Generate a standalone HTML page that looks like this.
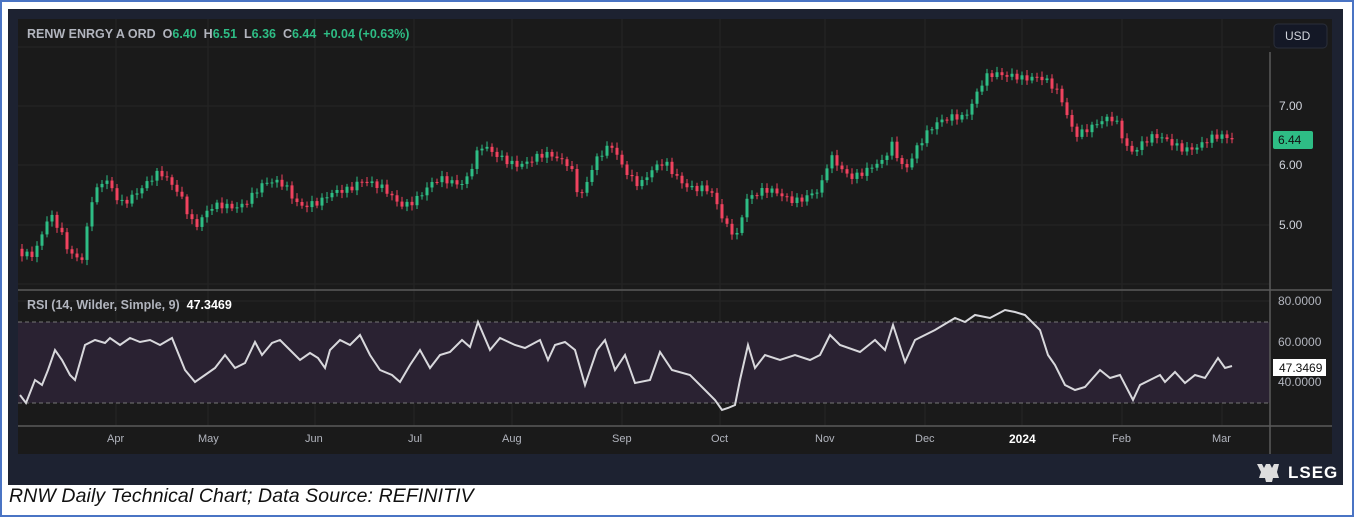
<!DOCTYPE html>
<html><head><meta charset="utf-8"><style>
*{margin:0;padding:0;box-sizing:border-box}
body{width:1354px;height:517px;background:#fff;position:relative;overflow:hidden;font-family:"Liberation Sans",sans-serif}
.outer{position:absolute;left:0;top:0;width:1354px;height:517px;border:2px solid #4a74c4}
.frame{position:absolute;left:8px;top:9px;width:1335px;height:476px;background:#1d2231}
.panel{position:absolute;left:18px;top:19px;width:1314px;height:435px;background:#1a1a1a}
.t{position:absolute;font-size:12px;color:#b2b5be;white-space:nowrap}
.g{color:#2ebd85}
.cap{position:absolute;left:9px;top:485px;font-size:19.5px;letter-spacing:0.1px;font-style:italic;color:#111}
</style></head><body>
<div class="outer"></div>
<div class="frame"></div>
<div class="panel"></div>
<svg id="s" width="1354" height="517" style="position:absolute;left:0;top:0">
<g stroke="#252525" stroke-width="1">
<line x1="116" y1="19" x2="116" y2="426"/><line x1="208" y1="19" x2="208" y2="426"/><line x1="315" y1="19" x2="315" y2="426"/><line x1="414" y1="19" x2="414" y2="426"/><line x1="512" y1="19" x2="512" y2="426"/><line x1="622" y1="19" x2="622" y2="426"/><line x1="720" y1="19" x2="720" y2="426"/><line x1="825" y1="19" x2="825" y2="426"/><line x1="925" y1="19" x2="925" y2="426"/><line x1="1022" y1="19" x2="1022" y2="426"/><line x1="1122" y1="19" x2="1122" y2="426"/><line x1="1222" y1="19" x2="1222" y2="426"/>
<line x1="18" y1="47" x2="1270" y2="47"/><line x1="18" y1="106" x2="1270" y2="106"/><line x1="18" y1="165" x2="1270" y2="165"/><line x1="18" y1="225" x2="1270" y2="225"/><line x1="18" y1="284" x2="1270" y2="284"/>
<line x1="18" y1="301" x2="1270" y2="301"/><line x1="18" y1="342" x2="1270" y2="342"/><line x1="18" y1="382" x2="1270" y2="382"/>
</g>
<rect x="18" y="322" width="1252" height="81" fill="#2a2232"/>
<line x1="18" y1="322" x2="1270" y2="322" stroke="#777" stroke-dasharray="4,3"/>
<line x1="18" y1="403" x2="1270" y2="403" stroke="#777" stroke-dasharray="4,3"/>
<line x1="18" y1="290" x2="1332" y2="290" stroke="#5a5a5a" stroke-width="1.5"/>
<line x1="18" y1="426" x2="1332" y2="426" stroke="#5a5a5a" stroke-width="1.5"/>
<line x1="1270" y1="52" x2="1270" y2="454" stroke="#5a5a5a" stroke-width="1.5"/>
<g id="c"></g>
<polyline id="r" fill="none" stroke="#d8d8dc" stroke-width="2"/>
<rect x="1274" y="24" width="53" height="24" rx="4" fill="#141826" stroke="#2a2e39"/>
<rect x="1273" y="131" width="40" height="18" rx="2" fill="#2ebd85"/>
<rect x="1273" y="359" width="53" height="17" fill="#fff"/>
<g fill="#ddd"><path d="M1257 464h5l2 4 2-4h4l2 4 2-4h5l-2 8 2 6h-6l-1 4h-6l-1-4h-6l2-6z"/></g>
</svg>
<div class="t" style="left:27px;top:27px;font-size:12.5px;font-weight:600">RENW ENRGY A ORD&nbsp; O<span class="g">6.40</span>&nbsp; H<span class="g">6.51</span>&nbsp; L<span class="g">6.36</span>&nbsp; C<span class="g">6.44</span>&nbsp; <span class="g">+0.04 (+0.63%)</span></div>
<div class="t" style="left:1285px;top:29px;color:#d1d4dc">USD</div>
<div class="t" style="left:1279px;top:99px;color:#d1d4dc">7.00</div>
<div class="t" style="left:1279px;top:158px;color:#d1d4dc">6.00</div>
<div class="t" style="left:1279px;top:218px;color:#d1d4dc">5.00</div>
<div class="t" style="left:1278px;top:133px;color:#111">6.44</div>
<div class="t" style="left:27px;top:298px;font-size:12.5px;font-weight:600">RSI (14, Wilder, Simple, 9)&nbsp; <b style="color:#fff">47.3469</b></div>
<div class="t" style="left:1278px;top:294px">80.0000</div>
<div class="t" style="left:1278px;top:335px">60.0000</div>
<div class="t" style="left:1278px;top:375px">40.0000</div>
<div class="t" style="left:1279px;top:361px;color:#111">47.3469</div>
<div class="t" style="left:107px;top:433px;font-size:11px">Apr</div>
<div class="t" style="left:198px;top:433px;font-size:11px">May</div>
<div class="t" style="left:305px;top:433px;font-size:11px">Jun</div>
<div class="t" style="left:408px;top:433px;font-size:11px">Jul</div>
<div class="t" style="left:502px;top:433px;font-size:11px">Aug</div>
<div class="t" style="left:612px;top:433px;font-size:11px">Sep</div>
<div class="t" style="left:711px;top:433px;font-size:11px">Oct</div>
<div class="t" style="left:815px;top:433px;font-size:11px">Nov</div>
<div class="t" style="left:915px;top:433px;font-size:11px">Dec</div>
<div class="t" style="left:1009px;top:432px;font-size:12px;color:#fff;font-weight:bold">2024</div>
<div class="t" style="left:1112px;top:433px;font-size:11px">Feb</div>
<div class="t" style="left:1212px;top:433px;font-size:11px">Mar</div>
<div class="t" style="left:1288px;top:463px;font-size:17px;font-weight:bold;color:#fff;letter-spacing:1px">LSEG</div>
<div class="cap">RNW Daily Technical Chart; Data Source: REFINITIV</div>
<script>
var P=[[22,4.6],[35,4.5],[50,5.1],[60,4.9],[70,4.6],[82,4.5],[92,5.4],[105,5.7],[120,5.4],[135,5.6],[150,5.7],[160,5.8],[180,5.6],[195,5.0],[210,5.2],[225,5.3],[240,5.4],[260,5.6],[285,5.7],[300,5.4],[320,5.3],[340,5.6],[360,5.8],[375,5.6],[400,5.4],[420,5.5],[440,5.7],[465,5.8],[480,6.3],[495,6.1],[520,6.1],[545,6.1],[570,6.1],[580,5.5],[595,6.0],[612,6.3],[625,6.0],[640,5.7],[665,6.0],[690,5.7],[710,5.5],[725,5.0],[738,4.9],[745,5.5],[760,5.5],[790,5.5],[820,5.5],[830,6.1],[850,5.9],[870,5.9],[885,6.0],[890,6.4],[905,6.0],[915,6.3],[935,6.6],[955,6.9],[965,6.9],[985,7.4],[1000,7.5],[1015,7.6],[1040,7.4],[1060,7.2],[1075,6.6],[1095,6.6],[1115,6.8],[1130,6.3],[1150,6.4],[1175,6.4],[1200,6.3],[1215,6.4],[1225,6.5],[1232,6.44]];
function ip(x){for(var i=0;i<P.length-1;i++){if(x<=P[i+1][0]){var a=P[i],b=P[i+1],t=(x-a[0])/(b[0]-a[0]);return a[1]+t*(b[1]-a[1]);}}return P[P.length-1][1];}
function Y(p){return 106+(7-p)*59.5;}
var h='',prev=ip(22);
for(var x=22;x<=1232;x+=5){var c=ip(x)+0.09*Math.sin(x*1.37)+0.05*Math.sin(x*0.53);if(x==1232)c=6.44;var o=prev;var hi=Math.max(o,c)+0.04+0.05*Math.abs(Math.sin(x*2.1)),lo=Math.min(o,c)-0.04-0.05*Math.abs(Math.cos(x*1.7));var col=c>=o?'#2ebd85':'#f0435f';var y1=Y(Math.max(o,c)),y2=Y(Math.min(o,c));if(y2-y1<1)y2=y1+1;
h+='<line x1="'+x+'" x2="'+x+'" y1="'+Y(hi)+'" y2="'+Y(lo)+'" stroke="'+col+'"/><rect x="'+(x-1.5)+'" y="'+y1+'" width="3" height="'+(y2-y1)+'" fill="'+col+'"/>';prev=c;}
document.getElementById('c').innerHTML=h;
document.getElementById('r').setAttribute('points',"20,395 26,403 35,380 42,385 48,370 55,350 62,360 70,375 75,380 85,345 95,340 105,343 110,338 120,345 130,338 140,342 150,340 160,345 172,338 185,370 195,382 205,375 215,368 225,355 235,368 245,363 255,342 262,355 272,343 280,340 290,350 300,360 310,353 318,358 325,368 330,350 340,340 350,345 360,335 370,355 380,370 392,375 400,382 410,365 420,350 430,368 440,355 450,352 462,340 470,347 478,322 490,350 500,338 515,345 525,348 540,340 548,360 555,345 565,342 575,350 585,385 597,350 605,340 615,370 625,355 635,383 650,380 660,352 672,370 690,375 705,390 715,400 722,410 728,408 735,405 740,380 748,345 755,368 765,355 780,360 795,355 810,360 820,355 830,335 840,345 860,352 875,340 885,350 893,325 905,362 915,340 935,330 955,318 965,322 975,315 990,318 1005,310 1015,312 1025,315 1040,330 1048,355 1055,365 1065,385 1075,390 1085,387 1100,370 1110,378 1120,375 1133,400 1140,385 1150,380 1160,375 1165,382 1175,372 1185,383 1195,375 1205,378 1218,358 1225,368 1232,366");
</script>
</body></html>
